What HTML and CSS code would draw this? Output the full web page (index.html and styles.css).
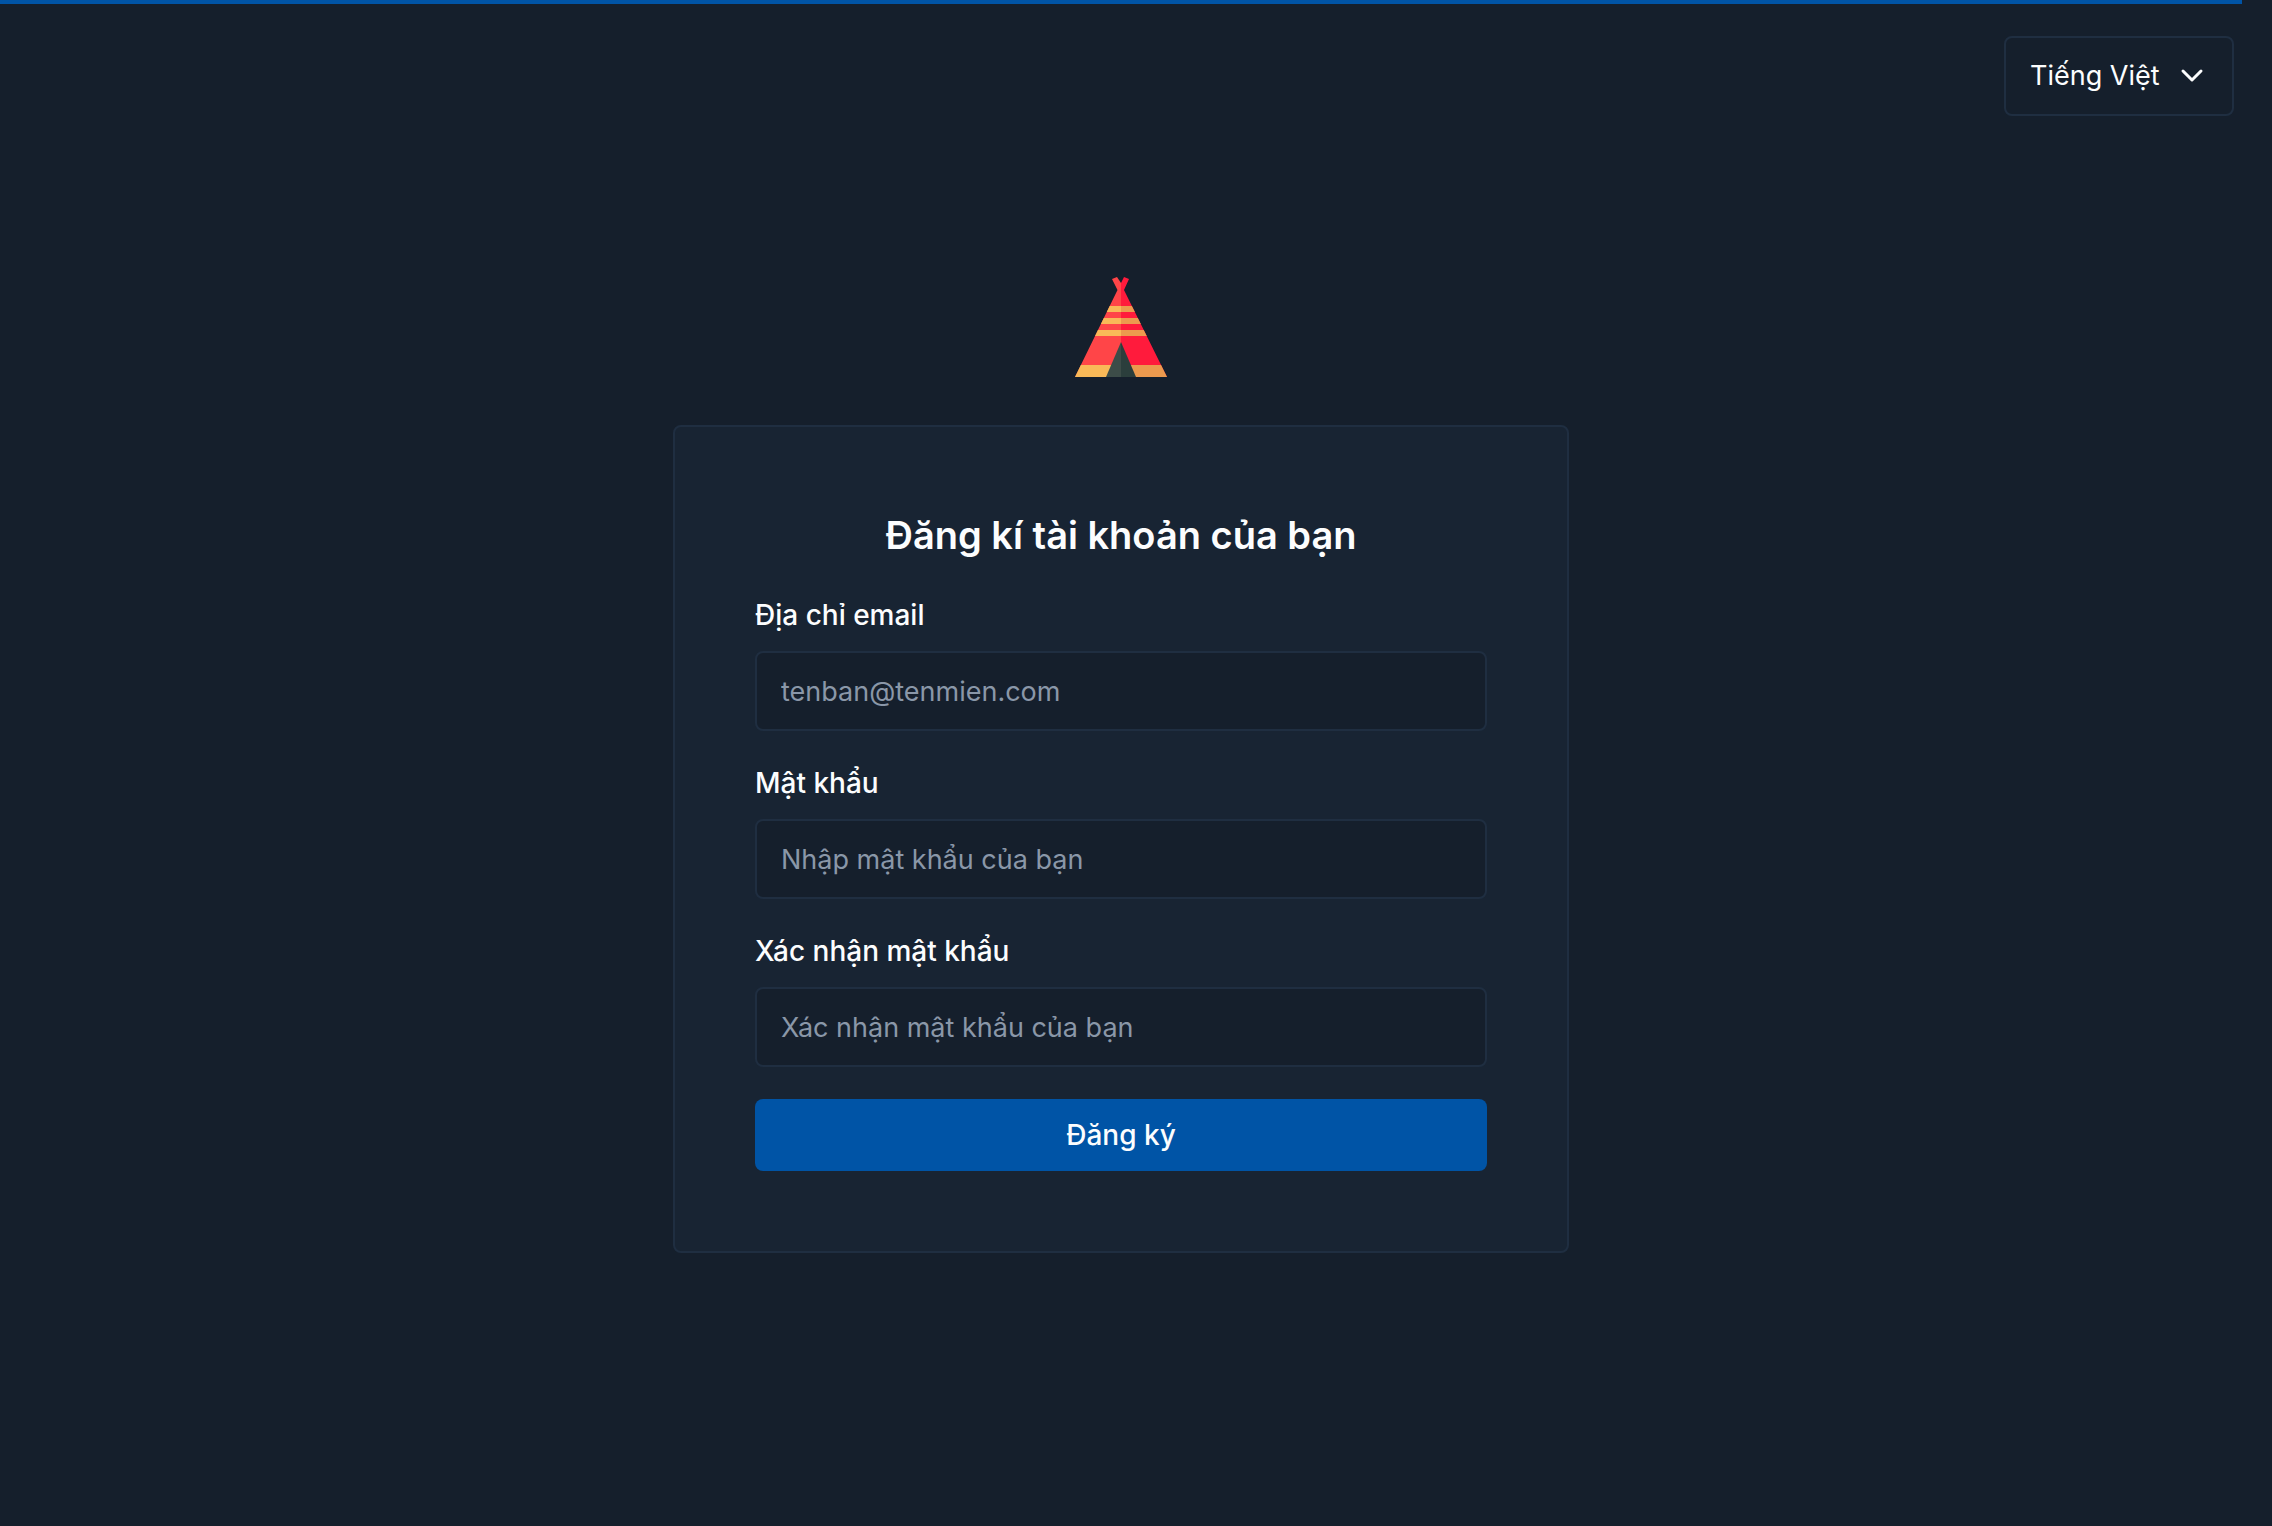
FILE: index.html
```html
<!DOCTYPE html>
<html lang="vi">
<head>
  <meta charset="utf-8">
  <meta name="viewport" content="width=device-width, initial-scale=1">
  <title>Đăng ký</title>
  <link rel="stylesheet" href="styles.css">
</head>
<body>
  <div class="page">
    <header class="topbar">
      <div class="language">
        <select class="language-select" aria-label="Ngôn ngữ">
          <option>Tiếng Việt</option>
        </select>
        <svg class="language-chevron" viewBox="0 0 32 32" aria-hidden="true">
          <path d="M7 11l9 9 9-9" fill="none" stroke="currentColor" stroke-width="3" stroke-linecap="round" stroke-linejoin="round"/>
        </svg>
      </div>
    </header>
    <main class="signup">
      <svg class="logo" viewBox="0 0 92 100" role="img" aria-label="Logo">
        <clipPath id="tent">
          <path d="M0 100L42.500 13 37 2l5-2 4 6 3-6 5 2-5 11 43 87z"/>
        </clipPath>
        <g clip-path="url(#tent)">
          <path fill="#ff4548" d="M0 0h46v100H0z"/>
          <path fill="#ff1b3c" d="M46 0h46v100H46z"/>
          <path fill="#f9b958" d="M0 29h46v6H0zM0 41h46v6H0zM0 53h46v6H0zM0 88h46v12H0z"/>
          <path fill="#ec9a4e" d="M46 29h46v6H46zM46 41h46v6H46zM46 53h46v6H46zM46 88h46v12H46z"/>
          <path fill="#3c4c48" d="M46 65v35H31z"/>
          <path fill="#2b3e3c" d="M46 65l15 35H46z"/>
        </g>
      </svg>
      <form class="card">
        <h1 class="card-title">Đăng kí tài khoản của bạn</h1>
        <div class="field">
          <label class="field-label" for="email">Địa chỉ email</label>
          <input class="field-input" id="email" type="email" placeholder="tenban@tenmien.com">
        </div>
        <div class="field">
          <label class="field-label" for="password">Mật khẩu</label>
          <input class="field-input" id="password" type="password" placeholder="Nhập mật khẩu của bạn">
        </div>
        <div class="field">
          <label class="field-label" for="confirm">Xác nhận mật khẩu</label>
          <input class="field-input" id="confirm" type="password" placeholder="Xác nhận mật khẩu của bạn">
        </div>
        <button class="submit" type="submit">Đăng ký</button>
      </form>
    </main>
  </div>
</body>
</html>
```

FILE: styles.css
```css
:root {
  --bg: #151f2c;
  --surface: #182433;
  --border: #1f2e41;
  --primary: #0054a6;
  --text: #fcfdfe;
  --muted: #8a97a8;
}

*,
*::before,
*::after {
  box-sizing: border-box;
}

body {
  margin: 0;
  padding-right: 30px;
  background: var(--bg);
  color: var(--text);
  font-family: Inter, "Noto Sans", sans-serif;
  font-size: 28px;
  line-height: 40px;
}

.page {
  display: grid;
  min-height: 100vh;
  border-top: 4px solid var(--primary);
}

/* The language bar and the centred form share one grid cell. */
.topbar,
.signup {
  grid-area: 1 / 1;
}

.topbar {
  align-self: start;
  justify-self: end;
  z-index: 1;
  padding: 32px 8px;
}

.language {
  display: grid;
  align-items: center;
}

.language-select,
.language-chevron {
  grid-area: 1 / 1;
}

.language-select {
  appearance: none;
  height: 80px;
  padding: 0 72px 0 24px;
  border: 2px solid var(--border);
  border-radius: 8px;
  background: var(--bg);
  color: inherit;
  font: inherit;
  font-size: 27px;
}

.language-chevron {
  justify-self: end;
  width: 32px;
  height: 32px;
  margin-right: 26px;
  pointer-events: none;
}

.signup {
  display: flex;
  flex-direction: column;
  align-items: center;
  justify-content: center;
  gap: 48px;
}

.logo {
  width: 92px;
  height: 100px;
}

.card {
  display: flex;
  flex-direction: column;
  gap: 32px;
  width: 100%;
  max-width: 896px;
  padding: 80px;
  border: 2px solid var(--border);
  border-radius: 8px;
  background: var(--surface);
}

.card-title {
  margin: 0;
  font-size: 38px;
  font-weight: 600;
  line-height: 56px;
  text-align: center;
}

.field {
  display: flex;
  flex-direction: column;
  gap: 16px;
}

.field-label {
  font-weight: 500;
}

.field-input {
  width: 100%;
  height: 80px;
  padding: 0 24px;
  border: 2px solid var(--border);
  border-radius: 8px;
  background: var(--bg);
  color: inherit;
  font: inherit;
  font-size: 27px;
}

.field-input::placeholder {
  color: var(--muted);
  opacity: 1;
}

.submit {
  height: 72px;
  border: 0;
  border-radius: 8px;
  background: var(--primary);
  color: inherit;
  font: inherit;
  font-weight: 500;
}
```
